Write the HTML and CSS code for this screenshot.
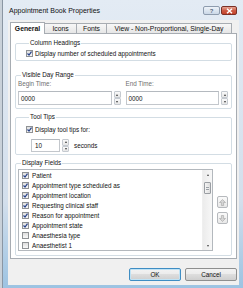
FILE: index.html
```html
<!DOCTYPE html>
<html lang="en">
<head>
    <meta charset="UTF-8">
    <title>Appointment Book Properties</title>
    <link rel="stylesheet" href="styles.css">
</head>
<body>

    <div class="window">
        <div class="titlebar">
            <span class="title">Appointment Book Properties</span>
            <div class="caption-buttons">
                <span class="cap-btn help">?</span>
                <span class="cap-btn close">
                    <svg width="7" height="6" viewBox="0 0 7 6"><path d="M1 0.8 L6 5.2 M6 0.8 L1 5.2" stroke="#fff" stroke-width="1.5"/></svg>
                </span>
            </div>
        </div>

        <div class="client">
            <!-- Tab strip -->
            <div class="tabs">
                <div class="tab active tab-general">General</div>
                <div class="tab tab-icons">Icons</div>
                <div class="tab tab-fonts">Fonts</div>
                <div class="tab tab-view">View - Non-Proportional, Single-Day</div>
            </div>

            <div class="panel">
                <fieldset class="group group-headings">
                    <legend>Column Headings</legend>
                    <div class="check-row">
                        <span class="box"><svg viewBox="0 0 5 5"><path d="M0.5 2.5 L2 4 L4.5 0.6"/></svg></span>
                        Display number of scheduled appointments
                    </div>
                </fieldset>

                <fieldset class="group group-range">
                    <legend>Visible Day Range</legend>
                    <div class="time-row">
                        <div class="time-field">
                            <div class="field-label">Begin Time:</div>
                            <div class="spin-input">
                                <div class="input">0000</div>
                                <div class="spin"><span class="spin-up"></span><span class="spin-down"></span></div>
                            </div>
                        </div>
                        <div class="time-field">
                            <div class="field-label">End Time:</div>
                            <div class="spin-input">
                                <div class="input">0000</div>
                                <div class="spin"><span class="spin-up"></span><span class="spin-down"></span></div>
                            </div>
                        </div>
                    </div>
                </fieldset>

                <fieldset class="group group-tips">
                    <legend>Tool Tips</legend>
                    <div class="check-row">
                        <span class="box"><svg viewBox="0 0 5 5"><path d="M0.5 2.5 L2 4 L4.5 0.6"/></svg></span>
                        Display tool tips for:
                    </div>
                    <div class="seconds-row">
                        <div class="spin-input seconds-input">
                            <div class="input">10</div>
                            <div class="spin"><span class="spin-up"></span><span class="spin-down"></span></div>
                        </div>
                        <span class="seconds-label">seconds</span>
                    </div>
                </fieldset>

                <fieldset class="group group-fields">
                    <legend>Display Fields</legend>
                    <div class="fields-row">
                        <div class="listbox">
                            <div class="list-items" id="list-items"></div>
                            <div class="scrollbar">
                                <span class="sb-arrow sb-up"></span>
                                <span class="sb-thumb"></span>
                                <span class="sb-arrow sb-down"></span>
                            </div>
                        </div>
                        <div class="move-buttons">
                            <span class="move-btn">
                                <svg width="7" height="7" viewBox="0 0 7 7"><path d="M3.5 0.5 L6.5 3.5 L4.6 3.5 L4.6 6.5 L2.4 6.5 L2.4 3.5 L0.5 3.5 Z"/></svg>
                            </span>
                            <span class="move-btn">
                                <svg width="7" height="7" viewBox="0 0 7 7"><path d="M3.5 6.5 L6.5 3.5 L4.6 3.5 L4.6 0.5 L2.4 0.5 L2.4 3.5 L0.5 3.5 Z"/></svg>
                            </span>
                        </div>
                    </div>
                </fieldset>
            </div>

            <div class="footer">
                <button class="btn default">OK</button>
                <button class="btn">Cancel</button>
            </div>
        </div>
    </div>

    <script>
        const fields = [
            { name: 'Patient', checked: true },
            { name: 'Appointment type scheduled as', checked: true },
            { name: 'Appointment location', checked: true },
            { name: 'Requesting clinical staff', checked: true },
            { name: 'Reason for appointment', checked: true },
            { name: 'Appointment state', checked: true },
            { name: 'Anaesthesia type', checked: false },
            { name: 'Anaesthetist 1', checked: false }
        ];

        // Fill the list of display fields
        const list = document.getElementById('list-items');
        let rows = '';
        fields.forEach(field => {
            const mark = field.checked ? '<svg viewBox="0 0 5 5"><path d="M0.5 2.5 L2 4 L4.5 0.6"/></svg>' : '';
            rows += `<div class="list-row"><span class="box">${mark}</span>${field.name}</div>`;
        });
        list.innerHTML = rows;
    </script>

</body>
</html>
```

FILE: styles.css
```css
body {
    margin: 0;
    width: 243px;
    height: 288px;
    overflow: hidden;
    background-color: #c9d1d9;
    font-family: "Liberation Sans", Arial, sans-serif;
    font-size: 6.3px;
    color: #111;
}

.window {
    height: 288px;
    margin-left: 2px;
    border-left: 1px solid #8a96a3;
    background: linear-gradient(#e3ebf4, #d3dfec 70%, #9cc3e2);
    padding: 0 4px 3px 5px;
    box-sizing: border-box;
    display: flex;
    flex-direction: column;
}

.titlebar {
    height: 20px;
    display: flex;
    align-items: center;
    justify-content: space-between;
    flex-shrink: 0;
}

.title {
    font-size: 7px;
    margin-left: 1px;
    color: #111;
}

.caption-buttons {
    display: flex;
    gap: 1px;
    margin-right: 2px;
    align-self: flex-start;
    margin-top: 6px;
}

.cap-btn {
    height: 9px;
    box-sizing: border-box;
    border-radius: 2px;
    display: flex;
    align-items: center;
    justify-content: center;
}

.help {
    width: 17px;
    border: 1px solid #8e9cae;
    background: linear-gradient(#eef3f9, #cbd8e7);
    color: #5a6a7d;
    font-size: 6px;
    font-weight: bold;
}

.close {
    width: 16px;
    border: 1px solid #7a3027;
    background: linear-gradient(#e6a595, #cc5b45 50%, #c4412a);
}

.close svg {
    display: block;
}

.client {
    flex: 1;
    background-color: #f0f0f0;
    padding: 2px 2px 0 2px;
    display: flex;
    flex-direction: column;
}

/* Tabs */
.tabs {
    display: flex;
    align-items: flex-end;
    height: 11px;
    position: relative;
    z-index: 1;
    font-size: 6.8px;
}

.tab {
    height: 10px;
    box-sizing: border-box;
    border: 1px solid #a7acb2;
    border-bottom: none;
    background: linear-gradient(#f7f7f7, #e6e6e6);
    display: flex;
    align-items: center;
    justify-content: center;
    margin-left: -1px;
    white-space: nowrap;
}

.tab.active {
    height: 12px;
    margin-bottom: -1px;
    margin-left: 0;
    background: #fff;
    font-weight: bold;
    position: relative;
    z-index: 2;
}

.tab-general { width: 35px; }
.tab-icons { width: 33px; }
.tab-fonts { width: 31px; }
.tab-view { width: 126px; }

.panel {
    height: 226px;
    box-sizing: border-box;
    border: 1px solid #a7acb2;
    background-color: #fff;
    padding: 5px 4px 0 4px;
}

/* Group boxes */
.group {
    margin: 0;
    border: 1px solid #d3dde4;
    border-radius: 2px;
    padding: 0;
    min-width: 0;
}

.group legend {
    line-height: 8px;
    padding: 0 1px;
    margin-left: 3px;
}

.group-headings {
    padding: 2px 0 2px 10px;
}

.group-range {
    margin-top: 10px;
    padding: 1px 3px 3px 2px;
}

.group-tips {
    margin-top: 4px;
    padding: 4px 0 2px 10px;
}

.group-fields {
    margin-top: 4px;
    padding: 2px 3px 4px 2px;
}

.check-row {
    height: 9px;
    display: flex;
    align-items: center;
    gap: 2px;
}

.box {
    width: 7px;
    height: 7px;
    box-sizing: border-box;
    border: 1px solid #8f9295;
    background: linear-gradient(#dedede, #f8f8f8);
    display: inline-block;
    flex-shrink: 0;
}

.box svg {
    display: block;
    width: 5px;
    height: 5px;
}

.box path {
    fill: none;
    stroke: #27428a;
    stroke-width: 1.2;
}

/* Time fields */
.time-row {
    display: flex;
    gap: 5px;
}

.time-field {
    flex: 1;
}

.field-label {
    line-height: 8px;
    color: #6f6f6f;
    margin-bottom: 3px;
}

.spin-input {
    display: flex;
    gap: 2px;
    height: 14px;
}

.input {
    flex: 1;
    box-sizing: border-box;
    border: 1px solid #c3c7cc;
    border-top-color: #b4b9bf;
    background: #fff;
    display: flex;
    align-items: center;
    padding-left: 2px;
}

.spin {
    width: 7px;
    display: flex;
    flex-direction: column;
}

.spin span {
    flex: 1;
    box-sizing: border-box;
    border: 1px solid #c5cad0;
    border-radius: 1px;
    background: linear-gradient(#fafafa, #e6e6e6);
    display: flex;
    align-items: center;
    justify-content: center;
}

.spin-up::after {
    content: "";
    border-left: 1.5px solid transparent;
    border-right: 1.5px solid transparent;
    border-bottom: 2px solid #3c3c3c;
}

.spin-down::after {
    content: "";
    border-left: 1.5px solid transparent;
    border-right: 1.5px solid transparent;
    border-top: 2px solid #3c3c3c;
}

.seconds-row {
    display: flex;
    align-items: center;
    margin-top: 5px;
    margin-left: 5px;
    height: 13px;
}

.seconds-input {
    width: 38px;
    height: 13px;
}

.seconds-input .input {
    padding-left: 3px;
}

.seconds-label {
    margin-left: 5px;
}

/* Display fields list */
.fields-row {
    display: flex;
    gap: 4px;
}

.listbox {
    flex: 1;
    height: 82px;
    box-sizing: border-box;
    border: 1px solid #b3b8bd;
    display: flex;
}

.list-items {
    flex: 1;
    padding-left: 3px;
}

.list-row {
    height: 10px;
    display: flex;
    align-items: center;
    gap: 3px;
    white-space: nowrap;
}

.scrollbar {
    width: 9px;
    background: linear-gradient(90deg, #ececec, #f7f7f7);
    border-left: 1px solid #efefef;
    display: flex;
    flex-direction: column;
    align-items: center;
}

.sb-arrow {
    height: 9px;
    display: flex;
    align-items: center;
}

.sb-up::after {
    content: "";
    border-left: 1.5px solid transparent;
    border-right: 1.5px solid transparent;
    border-bottom: 2px solid #4a4a4a;
}

.sb-down {
    margin-top: auto;
}

.sb-down::after {
    content: "";
    border-left: 1.5px solid transparent;
    border-right: 1.5px solid transparent;
    border-top: 2px solid #4a4a4a;
}

.sb-thumb {
    width: 7px;
    height: 12px;
    margin-top: 3px;
    box-sizing: border-box;
    border: 1px solid #9a9ea3;
    border-radius: 1px;
    background: repeating-linear-gradient(#ededed 0 1px, #9aa0a6 1px 2px) center / 3px 5px no-repeat,
                linear-gradient(90deg, #f4f4f4, #dcdcdc);
}

.move-buttons {
    width: 11px;
    display: flex;
    flex-direction: column;
    gap: 4px;
    padding-top: 27px;
}

.move-btn {
    height: 12px;
    box-sizing: border-box;
    border: 1px solid #b6b9bd;
    border-radius: 2px;
    background: linear-gradient(#fafafa, #e8e8e8);
    display: flex;
    align-items: center;
    justify-content: center;
}

.move-btn path {
    fill: #d6d6d6;
    stroke: #a2a2a2;
    stroke-width: 0.6;
}

/* Dialog buttons */
.footer {
    display: flex;
    justify-content: flex-end;
    gap: 4px;
    margin-top: 9px;
}

.btn {
    width: 52px;
    height: 13px;
    padding: 0;
    border: 1px solid #8e8f8f;
    border-radius: 2px;
    background: linear-gradient(#f3f3f3, #ebebeb 50%, #dddddd 50%, #cfcfcf);
    font-family: "Liberation Sans", Arial, sans-serif;
    font-size: 6.3px;
    color: #111;
}

.btn.default {
    border-color: #3f8dc3;
    box-shadow: inset 0 0 0 1px #bfe3f6;
}
```
